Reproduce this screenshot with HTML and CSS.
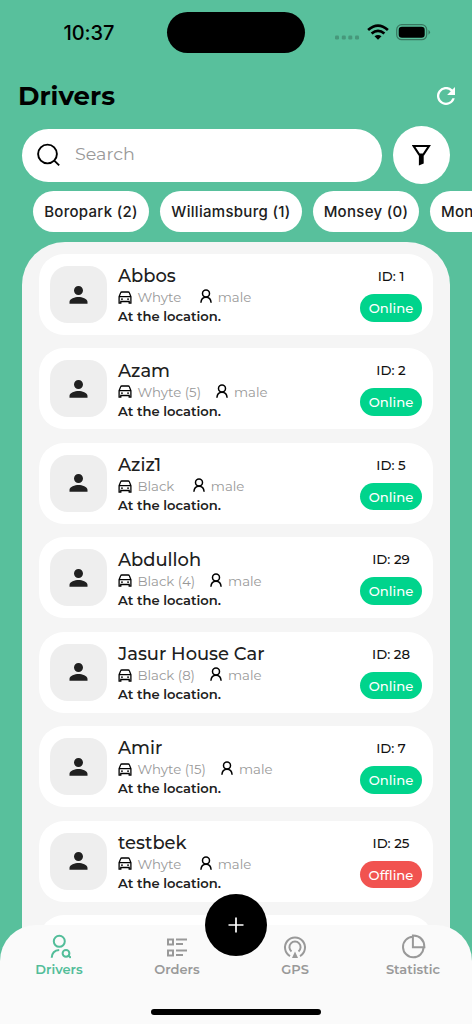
FILE: index.html
```html
<!DOCTYPE html>
<html lang="en">
<head>
<meta charset="utf-8">
<meta name="viewport" content="width=device-width, initial-scale=1">
<title>Drivers</title>
<link rel="stylesheet" href="styles.css">
</head>
<body>
<svg class="sprite" aria-hidden="true">
  <symbol id="user" viewBox="0 0 24 24"><path fill="currentColor" d="M11.500 12c2.500 0 4.500-2 4.500-4.500S14 3 11.500 3 7 5 7 7.500 9 12 11.500 12zm0 2c-3.500 0-9 1.700-9 4.800V20.700h18v-1.900c0-3.100-5.500-4.800-9-4.800z"/></symbol>
  <symbol id="car" viewBox="0 0 14 13"><g fill="none" stroke="currentColor" stroke-width="1.300"><path d="M1 5.700h12M1.100 12.200V5.700L2.600 1.900Q2.900 1 3.900 1h6.200q1 0 1.300.9L12.900 5.700v6.500H11.200V10.500H2.800v1.700z"/><path d="M3 8.100h1.900M9.100 8.100H11"/></g></symbol>
  <symbol id="person" viewBox="0 0 12 14"><g fill="none" stroke="currentColor" stroke-width="1.500"><circle cx="6" cy="4.400" r="3.500"/><path d="M.9 13.800C1.100 10.600 3 8.300 6 8.300S10.900 10.600 11.100 13.800"/></g></symbol>
</svg>
<main class="screen">
  <div class="statusbar">
    <span class="time">10:37</span>
    <span class="island"></span>
    <span class="indicators">
      <svg width="25" height="5" viewBox="0 0 25 5"><g fill="#46987b"><rect x="0" y=".5" width="4" height="4" rx="1.300"/><rect x="6.800" y=".5" width="4" height="4" rx="1.300"/><rect x="13.300" y=".5" width="4" height="4" rx="1.300"/><rect x="20" y=".5" width="4" height="4" rx="1.300"/></g></svg>
      <svg class="wifi" width="22" height="17" viewBox="0 0 22 17"><g fill="none" stroke="#000" stroke-width="2.700"><path d="M1.100 6Q11-2.900 20.900 6"/><path d="M4.600 9.600Q11 4 17.400 9.600"/></g><path d="M7.500 12.300Q11 9.500 14.500 12.300L11 15.800z"/></svg>
      <svg class="battery" width="35" height="17" viewBox="0 0 35 17"><rect x=".7" y=".7" width="30" height="15" rx="5" fill="none" stroke="#387760" stroke-width="1.200"/><rect x="2.700" y="2.700" width="26" height="11" rx="3.300"/><path d="M32.500 5.700q3 2.500 0 5z" fill="#387760"/></svg>
    </span>
  </div>
  <header class="header">
    <h1 class="title">Drivers</h1>
    <svg width="18" height="18" viewBox="0 0 18 18"><path d="M15.400 2.600A9 9 0 1 0 17.700 11.200H15.400A6.750 6.750 0 1 1 13.800 4.200L10.100 7.900H18V0z" fill="#fff"/></svg>
  </header>
  <div class="searchrow">
    <div class="search">
      <svg width="24" height="24" viewBox="0 0 24 24" fill="none" stroke="#000" stroke-width="1.900"><circle cx="10.500" cy="11" r="9.400"/><path d="M17 17.400l5.200 5"/></svg>
      <span class="placeholder">Search</span>
    </div>
    <div class="filter">
      <svg width="20" height="22" viewBox="0 0 20 22"><path d="M1.500 1.900H17.100L11.500 10.400H7.100z" fill="none" stroke="#000" stroke-width="2"/><path d="M6.900 10.200h4.800v9.400l-4.800 1.800z"/></svg>
    </div>
  </div>
  <nav class="chips">
    <span class="chip boropark">Boropark (2)</span><span class="chip williamsburg">Williamsburg (1)</span><span class="chip monsey">Monsey (0)</span><span class="chip monroe">Monroe (0)</span>
  </nav>
  <section class="list">
    <article class="card"><span class="avatar"><svg><use href="#user"/></svg></span><div class="info"><h2 class="name">Abbos</h2><p class="meta"><svg class="car"><use href="#car"/></svg><span>Whyte&nbsp;</span><svg class="person"><use href="#person"/></svg><span>male</span></p><p class="place">At the location.</p></div><div class="side"><span class="id">ID: 1</span><span class="badge">Online</span></div></article>
    <article class="card"><span class="avatar"><svg><use href="#user"/></svg></span><div class="info"><h2 class="name">Azam</h2><p class="meta"><svg class="car"><use href="#car"/></svg><span>Whyte (5)</span><svg class="person"><use href="#person"/></svg><span>male</span></p><p class="place">At the location.</p></div><div class="side"><span class="id">ID: 2</span><span class="badge">Online</span></div></article>
    <article class="card"><span class="avatar"><svg><use href="#user"/></svg></span><div class="info"><h2 class="name">Aziz1</h2><p class="meta"><svg class="car"><use href="#car"/></svg><span>Black&nbsp;</span><svg class="person"><use href="#person"/></svg><span>male</span></p><p class="place">At the location.</p></div><div class="side"><span class="id">ID: 5</span><span class="badge">Online</span></div></article>
    <article class="card"><span class="avatar"><svg><use href="#user"/></svg></span><div class="info"><h2 class="name">Abdulloh</h2><p class="meta"><svg class="car"><use href="#car"/></svg><span>Black (4)</span><svg class="person"><use href="#person"/></svg><span>male</span></p><p class="place">At the location.</p></div><div class="side"><span class="id">ID: 29</span><span class="badge">Online</span></div></article>
    <article class="card"><span class="avatar"><svg><use href="#user"/></svg></span><div class="info"><h2 class="name">Jasur House Car</h2><p class="meta"><svg class="car"><use href="#car"/></svg><span>Black (8)</span><svg class="person"><use href="#person"/></svg><span>male</span></p><p class="place">At the location.</p></div><div class="side"><span class="id">ID: 28</span><span class="badge">Online</span></div></article>
    <article class="card"><span class="avatar"><svg><use href="#user"/></svg></span><div class="info"><h2 class="name">Amir</h2><p class="meta"><svg class="car"><use href="#car"/></svg><span>Whyte (15)</span><svg class="person"><use href="#person"/></svg><span>male</span></p><p class="place">At the location.</p></div><div class="side"><span class="id">ID: 7</span><span class="badge">Online</span></div></article>
    <article class="card"><span class="avatar"><svg><use href="#user"/></svg></span><div class="info"><h2 class="name">testbek</h2><p class="meta"><svg class="car"><use href="#car"/></svg><span>Whyte&nbsp;</span><svg class="person"><use href="#person"/></svg><span>male</span></p><p class="place">At the location.</p></div><div class="side"><span class="id">ID: 25</span><span class="badge offline">Offline</span></div></article>
    <article class="card"></article>
  </section>
  <footer class="tabbar">
    <div class="tab active"><svg width="24" height="26" viewBox="0 0 24 26" fill="none" stroke="currentColor" stroke-width="2"><circle cx="12.300" cy="8.300" r="5.500"/><path d="M4.700 24.800C4.900 20.500 7.500 17.300 12.200 17"/><circle cx="19" cy="20.300" r="3.400"/><path d="M21.300 22.500l2.400 2.200"/></svg><span>Drivers</span></div>
    <div class="tab"><svg width="24" height="26" viewBox="0 0 24 26" fill="none" stroke="currentColor" stroke-width="2"><path d="M3 6.500h5v5H3zM3 17.500h5v5H3zM11 6.500h11M11 11h7M11 17.500h11M11 22h7"/></svg><span>Orders</span></div>
    <div class="tab"><svg width="24" height="26" viewBox="0 0 24 26" fill="none" stroke="currentColor" stroke-width="2"><path d="M7 23.100A10 10 0 1 1 17 23.100M8.500 18.500A5.600 5.600 0 1 1 15.500 18.500"/><path d="M12 18.500l3 6.500H9z" fill="currentColor" stroke="none"/></svg><span>GPS</span></div>
    <div class="tab"><svg width="26" height="26" viewBox="0 0 26 26" fill="none" stroke="currentColor" stroke-width="2"><path d="M12.900 3.700A10.300 10.300 0 1 0 23.600 14.300M12.900 2.600V14.300H24.400Q24.100 3.100 12.900 2.600z"/></svg><span>Statistic</span></div>
    <span class="home"></span>
    <button class="add" aria-label="Add"><svg width="16" height="16" viewBox="0 0 16 16"><path d="M8 .5v15M.5 8h15" stroke="#fff" stroke-width="1.700"/></svg></button>
  </footer>
</main>
</body>
</html>
```

FILE: styles.css
```css
* { box-sizing: border-box; }
body { margin: 0; font-family: Montserrat, Inter, sans-serif; color: #202020; }
h1, h2, p { margin: 0; }
svg { display: block; flex: none; }
.sprite { position: absolute; width: 0; height: 0; }
.screen { position: relative; width: 472px; height: 1024px; overflow: hidden; background: #58c09c; }
.statusbar { display: flex; height: 66px; }
.time { width: 167px; padding: 20px 0 0 63.500px; font: 500 20px/26px Inter, sans-serif; letter-spacing: -.1px; color: #000; }
.island { width: 138px; height: 41px; margin-top: 12px; border-radius: 21px; background: #000; }
.indicators { display: flex; padding: 24px 0 0 30px; }
.indicators > svg:first-child { margin-top: 11px; }
.wifi { margin-left: 7px; }
.battery { margin-left: 7px; }
.header { display: flex; justify-content: space-between; align-items: center; height: 60px; padding: 0 17px 0 18px; }
.title { font-size: 26px; line-height: 32px; font-weight: 700; color: #000; }
.searchrow { display: flex; align-items: center; gap: 11px; padding-left: 22px; height: 58px; }
.search { display: flex; align-items: center; width: 360px; height: 53px; padding-left: 15px; border-radius: 27px; background: #fff; }
.placeholder { margin: -2px 0 0 14px; font-size: 17.500px; line-height: 24px; color: #999; }
.filter { display: grid; place-items: center; width: 57px; height: 58px; border-radius: 50%; background: #fff; }
.chips { display: flex; gap: 11px; padding: 7px 0 11px 33px; height: 58px; }
.chip { flex: none; height: 40.500px; border-radius: 21px; background: #fff; text-align: center; white-space: nowrap; font: 450 15px/41px Inter, sans-serif; letter-spacing: .3px; }
.boropark { width: 116px; }
.williamsburg { width: 142px; }
.monsey { width: 106px; }
.monroe { width: 110px; padding-left: 11px; text-align: left; }
.list { display: flex; flex-direction: column; gap: 13.450px; width: 428px; height: 800px; margin-left: 22px; padding: 12px 17px; border-radius: 43px 43px 0 0; background: #f5f5f5; }
.card { display: flex; flex: none; height: 81px; padding: 12px 11px; border-radius: 25px; background: #fff; }
.avatar { display: grid; place-items: center; width: 57px; height: 57px; border-radius: 18px; background: #eee; flex: none; }
.avatar svg { width: 24px; height: 24px; }
.info { flex: 1; margin-left: 11px; padding-top: .3px; min-width: 0; }
.name { height: 21px; font-size: 17.900px; line-height: 19px; font-weight: 500; white-space: nowrap; }
.meta { display: flex; align-items: center; height: 20px; font-size: 13.300px; line-height: 20px; color: #999; white-space: nowrap; }
.car { width: 14px; height: 13px; color: #000; margin: 0 5.500px 0 0; }
.person { width: 12px; height: 14px; color: #000; margin: -2px 6px 0 15px; }
.place { font-size: 13.100px; line-height: 18px; font-weight: 600; }
.side { display: flex; flex-direction: column; align-items: center; width: 62px; }
.id { height: 28px; font-size: 13.300px; line-height: 21px; font-weight: 500; color: #111; }
.badge { width: 62px; height: 27.500px; border-radius: 14px; background: #00d48c; color: #fff; font-size: 13.200px; line-height: 28px; font-weight: 500; text-align: center; }
.offline { background: #f15350; }
.tabbar { position: absolute; left: 0; bottom: 0; display: flex; width: 472px; height: 99.500px; padding-top: 8.500px; border-radius: 36px 36px 0 0; background: #fafafa; }
.tab { display: flex; flex-direction: column; align-items: center; width: 118px; color: #999; font-size: 13px; line-height: 20px; font-weight: 600; }
.active { color: #52bd99; }
.home { position: absolute; left: 151px; top: 84.500px; width: 170px; height: 6px; border-radius: 3px; background: #000; }
.add { position: absolute; left: 205px; top: -30.500px; display: grid; place-items: center; width: 62px; height: 62px; border: 0; padding: 0; border-radius: 50%; background: #000; }
```
